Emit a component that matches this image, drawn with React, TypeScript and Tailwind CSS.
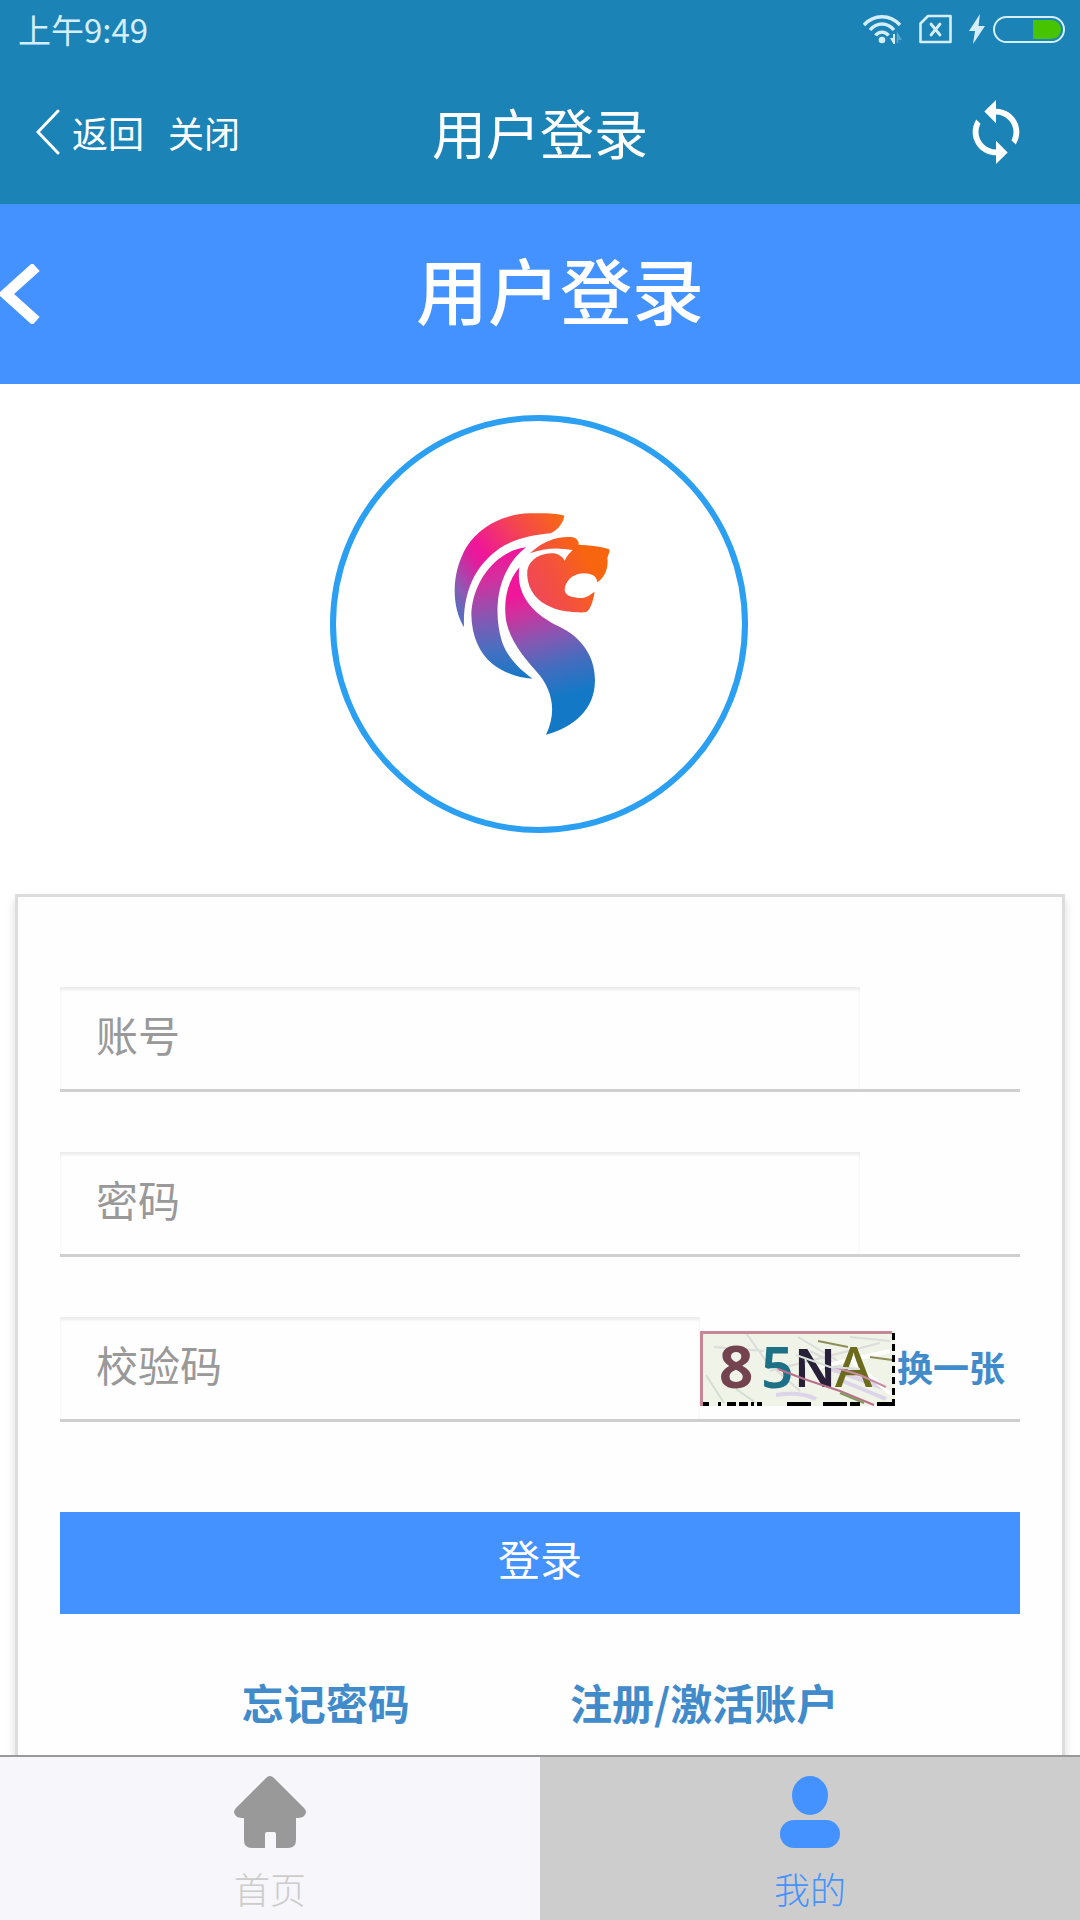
import { MdSync } from 'react-icons/md';

interface FieldProps {
  id: string;
  type: string;
  placeholder: string;
  inputClassName: string;
  children?: React.ReactNode;
}

function StatusBar() {
  return (
    <div className="flex h-[60px] items-center justify-between pb-0.5 pl-[18px] pr-[15px] text-[#d5effa]">
      <span className="text-[33px] leading-[48px]">上午9:49</span>
      <div className="flex items-center">
        <svg className="mr-4" width="40" height="30" viewBox="0 0 40 30" fill="none">
          <g stroke="currentColor" strokeWidth="3.4">
            <path d="M1 11C11 0 27 0 37 11" />
            <path d="M7 16C14 8 24 8 31 16" />
            <path d="M12.500 21.500C16 17 22 17 25.500 21.500" />
          </g>
          <circle cx="19" cy="26" r="3.300" fill="currentColor" />
          <path d="M27 24h3V20h2v10h-1.500z" fill="currentColor" />
          <path d="M34.500 29V20l3 5h-2.500" stroke="#5ea9cf" strokeWidth="1.500" />
        </svg>
        <svg className="mr-4" width="34" height="30" viewBox="0 0 34 30" fill="none" stroke="currentColor">
          <path d="M9 2H31.500V28H1.500V9.500Z" strokeWidth="2.600" strokeLinejoin="round" />
          <path d="M12 10l9 11M21 10L12 21" strokeWidth="2.800" strokeLinecap="round" />
        </svg>
        <svg className="mr-1.5" width="18" height="30" viewBox="0 0 18 30" fill="currentColor">
          <path d="M11 0L0 17h6L4 30 16 12h-6.500z" />
        </svg>
        <svg width="72" height="30" viewBox="0 0 72 30">
          <rect x="1" y="3" width="70" height="25" rx="12.500" fill="none" stroke="currentColor" strokeWidth="2" />
          <path d="M40 6H59a9 9.500 0 0 1 0 19H40z" fill="#46c400" />
        </svg>
      </div>
    </div>
  );
}

function AppHeader() {
  return (
    <div className="grid h-36 grid-cols-[1fr_auto_1fr] items-center text-white">
      <div className="flex items-center pl-9 text-[36px] leading-[48px]">
        <button type="button" className="flex items-center gap-3">
          <svg width="24" height="46" viewBox="0 0 24 46" fill="none" stroke="currentColor" strokeWidth="3">
            <path d="M22 2L2 23l20 21" strokeLinecap="round" />
          </svg>
          返回
        </button>
        <button type="button" className="ml-6">关闭</button>
      </div>
      <h1 className="text-[54px] leading-[72px]">用户登录</h1>
      <button type="button" aria-label="刷新" className="mr-[49px] justify-self-end">
        <MdSync size={70} />
      </button>
    </div>
  );
}

function Logo() {
  return (
    <svg className="mx-auto" width="420" height="420" viewBox="0 0 420 420">
      <defs>
        <linearGradient id="mane" gradientUnits="userSpaceOnUse" x1="400" y1="70" x2="60" y2="330">
          <stop offset="0" stopColor="#f96b0e" />
          <stop offset="0.300" stopColor="#f4484c" />
          <stop offset="0.620" stopColor="#ef1699" />
          <stop offset="0.700" stopColor="#e01e9c" />
          <stop offset="0.900" stopColor="#8b5bb4" />
          <stop offset="1" stopColor="#5a6cbd" />
        </linearGradient>
        <linearGradient id="mid" gradientUnits="userSpaceOnUse" x1="215" y1="190" x2="270" y2="560">
          <stop offset="0" stopColor="#ef1699" />
          <stop offset="0.200" stopColor="#d2309f" />
          <stop offset="0.500" stopColor="#8458b3" />
          <stop offset="0.750" stopColor="#496fc0" />
          <stop offset="1" stopColor="#1678c6" />
        </linearGradient>
        <linearGradient id="body" gradientUnits="userSpaceOnUse" x1="240" y1="320" x2="330" y2="640">
          <stop offset="0" stopColor="#ef1699" />
          <stop offset="0.150" stopColor="#d42f9c" />
          <stop offset="0.450" stopColor="#8458b3" />
          <stop offset="0.700" stopColor="#466cbe" />
          <stop offset="1" stopColor="#1379c6" />
        </linearGradient>
        <linearGradient id="head" gradientUnits="userSpaceOnUse" x1="310" y1="310" x2="480" y2="220">
          <stop offset="0" stopColor="#ef4857" />
          <stop offset="0.450" stopColor="#f4523d" />
          <stop offset="1" stopColor="#f8650f" />
        </linearGradient>
      </defs>
      <circle cx="209" cy="210" r="206" fill="none" stroke="#2b9ff2" strokeWidth="6" />
      <g transform="translate(100 76) scale(0.3333)">
        <path
          fill="url(#mane)"
          d="M102 412C98 300 140 215 225 165C270 142 320 134 362 130C385 118 400 98 403 77C380 70 340 69 300 70C215 73 150 110 110 170C65 245 62 345 102 412Z"
        />
        <path
          fill="url(#mid)"
          d="M288 172C200 182 130 270 124 370C124 440 150 490 185 520C220 548 265 564 308 566C265 535 232 500 216 455C190 370 195 245 288 172Z"
        />
        <path
          fill="url(#body)"
          d="M268 232C232 275 220 330 228 390C240 455 285 505 320 545C370 600 380 670 348 734C430 712 495 660 495 570C495 495 450 440 390 411C330 382 255 330 268 232Z"
        />
        <path
          fill="url(#head)"
          d="M300 190C335 155 380 138 425 141C440 143 448 155 446 164C470 166 510 167 538 178C540 192 529 200 533 212C533 245 520 264 502 277C500 258 485 250 460 250C425 252 405 275 404 300C405 318 430 324 455 324C475 322 485 310 494 305C490 330 482 362 466 367C430 368 385 365 350 345C310 325 288 285 292 240C300 205 335 189 370 190C385 192 398 200 404 212C410 198 418 190 428 180C385 172 340 174 300 190Z"
        />
      </g>
    </svg>
  );
}

function Captcha() {
  return (
    <svg width="195" height="75" viewBox="0 0 195 75" role="img" aria-label="验证码" className="shrink-0">
      <rect width="195" height="75" fill="#f0f3e7" />
      <g fill="none" strokeWidth="2">
        <path d="M14 16l50 4M46 2l20 28 34 30M98 6l40 24 50 30M110 20l80 40M70 40l110-28M150 6l40 4" stroke="#dcdcdc" />
        <path d="M6 44l18 28M36 58l20 14" stroke="#d3dfd0" />
        <path d="M76 64q24-4 40 4M120 34l66 24M138 48l48 20" stroke="#dcd5ea" strokeWidth="4" />
        <path d="M152 30l40 34M110 38l80-18" stroke="#ffffff" strokeWidth="4" />
      </g>
      <g fontFamily="Noto Sans, sans-serif">
        <text x="19" y="57" fontSize="60" fontWeight="700" fill="#73444f">8</text>
        <text x="61" y="57" fontSize="57" fontWeight="600" fill="#1d7186">5</text>
        <text x="94" y="56" fontSize="53" fontWeight="600" fill="#282039">N</text>
        <text x="135" y="56" fontSize="57" fontWeight="500" fill="#6c6b1c">A</text>
      </g>
      <g fill="none" strokeWidth="2">
        <path d="M118 10l30 6M170 26l22 3" stroke="#8e8d57" />
        <path d="M78 38l26 10 36 12 34 14" stroke="#b9708c" />
        <path d="M134 36l26 8 26 12" stroke="#c98aa4" />
        <path d="M96 24l34 12 30 2" stroke="#d8e0dc" />
        <path d="M140 62l24 10" stroke="#7f9a5a" />
      </g>
      <path d="M1.500 75V1.500H192" fill="none" stroke="#c58796" strokeWidth="3" />
      <path d="M3 73h6M18 73h3M27 73h9M39 73h9M51 73h3M57 73h5M87 73h24M123 73h24M150 73h10M177 73h16" stroke="#000" strokeWidth="4" />
      <path d="M193.500 2v73" stroke="#000" strokeWidth="3" strokeDasharray="7 4" />
    </svg>
  );
}

function Field({ id, type, placeholder, inputClassName, children }: FieldProps) {
  return (
    <div className="flex items-center border-b-[3px] border-[#cfcfcf]">
      <input
        id={id}
        type={type}
        aria-label={placeholder}
        placeholder={placeholder}
        className={`h-[102px] bg-transparent pb-2.5 pl-9 text-[42px] shadow-[inset_0_3px_3px_rgba(0,0,0,0.075)] outline-none placeholder:text-[#999999] ${inputClassName}`}
      />
      {children}
    </div>
  );
}

function HomeIcon() {
  return (
    <svg width="72" height="72" viewBox="0 0 72 72" fill="currentColor">
      <path d="M32 2q4-4 8 0L70 32q4 4 0 8-2 2-8 2V64q0 8-8 8H42V58q0-2-2-2h-7q-2 0-2 2V72H18q-8 0-8-8V42q-6 0-8-2-4-4 0-8z" />
    </svg>
  );
}

function UserIcon() {
  return (
    <svg width="72" height="72" viewBox="0 0 72 72" fill="currentColor">
      <ellipse cx="36" cy="19.500" rx="18" ry="19.500" />
      <rect x="6" y="44" width="60" height="28" rx="14" />
    </svg>
  );
}

export default function App() {
  return (
    <div className="flex min-h-screen flex-col bg-white font-['Noto_Sans_CJK_SC',sans-serif]">
      <header className="bg-[#1c83b7]">
        <StatusBar />
        <AppHeader />
      </header>

      <div className="flex h-[180px] items-center bg-[#4492ff] text-white">
        <button type="button" aria-label="返回">
          <svg width="40" height="60" viewBox="0 0 40 60" fill="none" stroke="currentColor" strokeWidth="11">
            <path d="M36 3L6 30l30 27" />
          </svg>
        </button>
        <h2 className="flex-1 pb-3 text-center text-[72px] font-medium leading-[96px]">用户登录</h2>
      </div>

      <main className="flex flex-1 flex-col pt-[30px]">
        <Logo />

        <form className="mx-[15px] mt-[60px] flex-1 border-[3px] border-b-0 border-[#dddddd] bg-[#fefefe] px-[42px] pt-[90px] shadow-[0_6px_9px_rgba(0,0,0,0.15)]">
          <div className="flex flex-col gap-[60px]">
            <Field id="account" type="text" placeholder="账号" inputClassName="w-5/6" />
            <Field id="password" type="password" placeholder="密码" inputClassName="w-5/6" />
            <Field id="captcha" type="text" placeholder="校验码" inputClassName="w-2/3">
              <Captcha />
              <a href="#captcha" className="pb-1 pl-0.5 whitespace-nowrap text-[36px] font-bold leading-[48px] text-[#428bca]">换一张</a>
            </Field>
          </div>

          <button type="submit" className="mt-[90px] h-[102px] w-full bg-[#4492ff] pb-2.5 text-[42px] leading-[60px] text-white">
            登录
          </button>

          <div className="mt-[58px] flex justify-center gap-40 text-[42px] font-bold leading-[60px] text-[#428bca]">
            <a href="#forgot">忘记密码</a>
            <a href="#register">注册/激活账户</a>
          </div>
        </form>
      </main>

      <nav className="grid h-[165px] grid-cols-2 border-t-2 border-[#999999] text-[36px] font-light leading-[48px]">
        <a href="#home" className="flex flex-col items-center gap-4 bg-[#f7f6fb] pt-[19px] text-[#999999]">
          <HomeIcon />
          <span className="text-[#cccccc]">首页</span>
        </a>
        <a href="#mine" className="flex flex-col items-center gap-4 bg-[#cdcdcd] pt-[19px] text-[#4492ff]">
          <UserIcon />
          <span>我的</span>
        </a>
      </nav>
    </div>
  );
}
